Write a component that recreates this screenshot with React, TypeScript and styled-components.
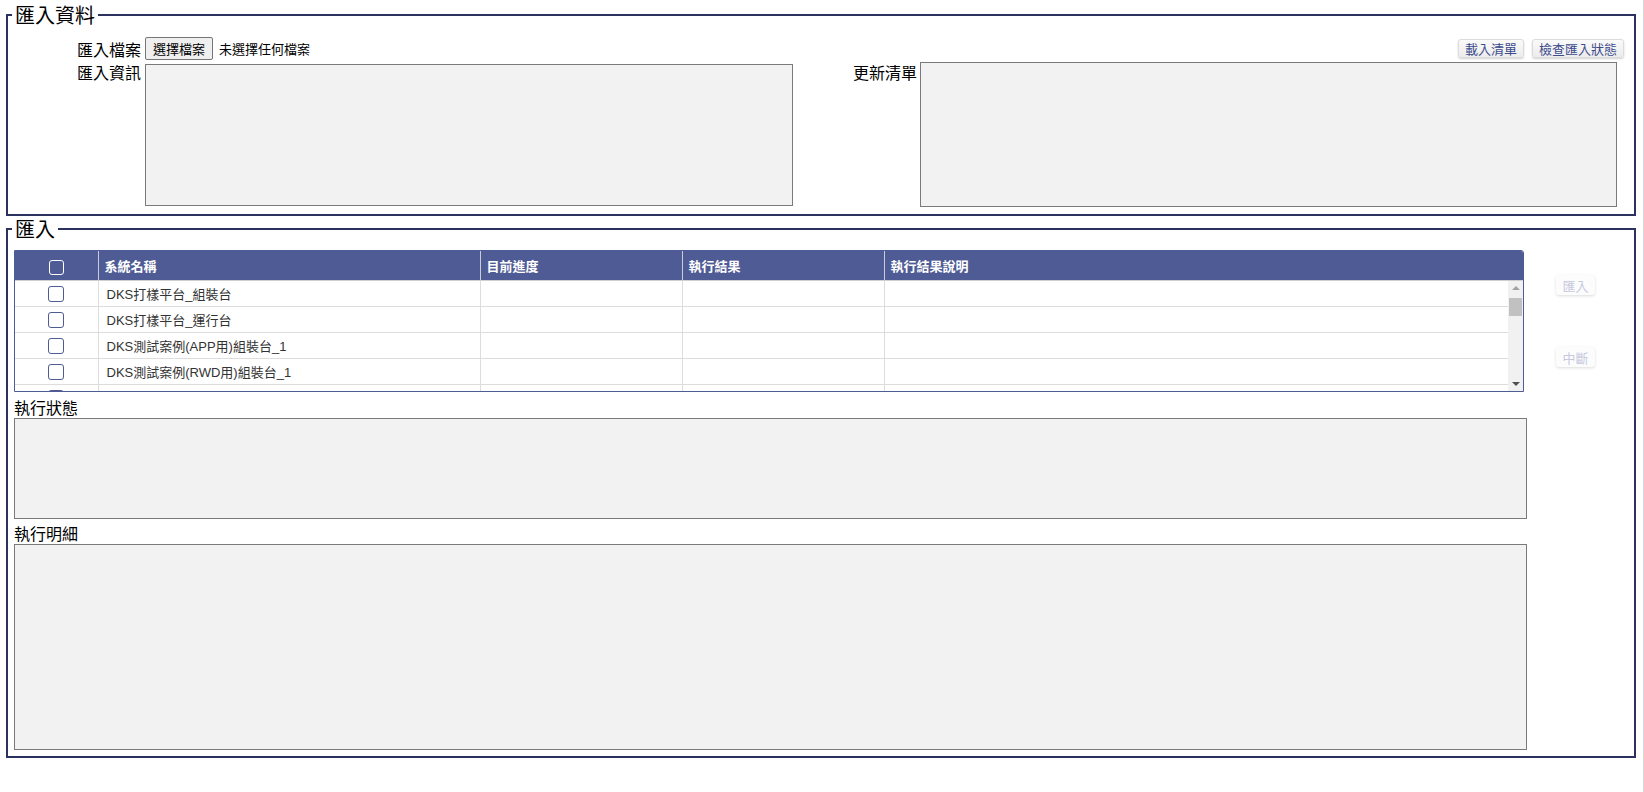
import styled, { createGlobalStyle } from 'styled-components';

const GlobalStyle = createGlobalStyle`
  html, body {
    margin: 0;
    padding: 0;
    background: #fff;
  }
  body {
    font-family: "Liberation Sans", "Noto Sans CJK TC", sans-serif;
    color: #222;
  }
  * {
    box-sizing: border-box;
  }
`;

const Page = styled.div`
  min-height: 100vh;
  padding-top: 4px;
  border-right: 1px solid #d6d6d6;
`;

const Fieldset = styled.fieldset`
  margin: 0 7px 0 6px;
  padding: 0;
  min-width: 0;
  border: 2px solid #2c3260;

  & + & {
    margin-top: 2px;
  }
`;

const Legend = styled.legend`
  margin-left: 4px;
  padding: 0 3px;
  font-family: "Noto Sans CJK TC", sans-serif;
  font-size: 20px;
  line-height: 22px;
  color: #000;
`;

const TopRow = styled.div`
  display: flex;
  align-items: center;
  margin-top: 11px;
  padding-right: 10px;
`;

const FieldLabel = styled.label<{ $width: number; $gap?: number }>`
  flex: none;
  width: ${(p) => p.$width}px;
  margin-right: ${(p) => p.$gap ?? 4}px;
  text-align: right;
  font-family: "Noto Sans CJK TC", sans-serif;
  font-size: 16px;
  line-height: 20px;
  color: #000;
`;

const FileButton = styled.button`
  height: 23px;
  padding: 0 7px;
  border: 1px solid #767676;
  border-radius: 2px;
  background: #efefef;
  font-family: "Noto Sans CJK TC", sans-serif;
  font-size: 13px;
  color: #000;
`;

const FileName = styled.span`
  margin-left: 6px;
  font-family: "Noto Sans CJK TC", sans-serif;
  font-size: 13px;
  color: #000;
`;

const Spacer = styled.div`
  flex: 1;
`;

const ToolButton = styled.button`
  height: 19px;
  padding: 0 6px;
  margin-left: 8px;
  border: 1px solid #dcdcdc;
  border-radius: 3px;
  background: linear-gradient(#fafafa, #ececec);
  box-shadow: 0 1px 2px rgba(0, 0, 0, 0.18);
  font-family: "Noto Sans CJK TC", sans-serif;
  font-size: 13px;
  line-height: 17px;
  color: #3d4b8c;
`;

const InfoRow = styled.div`
  display: flex;
  align-items: flex-start;
  margin-top: 2px;
  padding-bottom: 7px;
`;

const TextBox = styled.textarea<{ $width: number; $height: number; $offset?: number }>`
  display: block;
  flex: none;
  width: ${(p) => p.$width}px;
  height: ${(p) => p.$height}px;
  margin: ${(p) => p.$offset ?? 0}px 0 0;
  border: 1px solid #7a7a7a;
  background: #f2f2f2;
  resize: none;
  font-family: "Liberation Sans", "Noto Sans CJK TC", sans-serif;
  font-size: 13px;
`;

const ImportBody = styled.div`
  display: flex;
  align-items: flex-start;
  padding: 10px 0 6px 6px;
`;

const MainColumn = styled.div`
  width: 1513px;
`;

const SideColumn = styled.div`
  display: flex;
  flex-direction: column;
  gap: 52px;
  margin-left: 29px;
  padding-top: 25px;
`;

const SideButton = styled.button`
  width: 39px;
  height: 20px;
  padding: 0;
  border: none;
  border-radius: 3px;
  background: #fcfcfd;
  box-shadow: 0 1px 3px rgba(0, 0, 0, 0.14);
  font-family: "Noto Sans CJK TC", sans-serif;
  font-size: 13px;
  color: #c6c9dd;
`;

const Grid = styled.div`
  width: 1510px;
  border: 1px solid #4f5b95;
  border-radius: 0 3px 0 0;
  overflow: hidden;
`;

const HeadTable = styled.table`
  width: 100%;
  table-layout: fixed;
  border-collapse: collapse;
  background: #4f5b95;
`;

const HeadCell = styled.th<{ $center?: boolean }>`
  height: 29px;
  padding: 0 6px;
  border-right: 1px solid #c9cbd6;
  border-bottom: 1px solid #cfcfcf;
  text-align: ${(p) => (p.$center ? 'center' : 'left')};
  font-family: "Noto Sans CJK TC", sans-serif;
  font-size: 13px;
  font-weight: 700;
  color: #fff;

  &:last-child {
    border-right: none;
  }
`;

const BodyWrap = styled.div`
  display: flex;
  height: 110px;
`;

const BodyScroll = styled.div`
  flex: 1;
  min-width: 0;
  overflow: hidden;
`;

const Rail = styled.div`
  flex: none;
  display: flex;
  flex-direction: column;
  align-items: center;
  width: 15px;
  background: #f1f1f1;
`;

const RailArrow = styled.div<{ $down?: boolean }>`
  flex: none;
  width: 0;
  height: 0;
  margin: ${(p) => (p.$down ? 'auto 0 5px' : '5px 0 0')};
  border-left: 4px solid transparent;
  border-right: 4px solid transparent;
  ${(p) =>
    p.$down ? 'border-top: 4px solid #505050;' : 'border-bottom: 4px solid #a3a3a3;'}
`;

const RailThumb = styled.div`
  flex: none;
  width: 13px;
  height: 18px;
  margin-top: 8px;
  background: #c1c1c1;
`;

const BodyTable = styled.table`
  width: 100%;
  table-layout: fixed;
  border-collapse: collapse;
`;

const Cell = styled.td<{ $center?: boolean }>`
  height: 26px;
  padding: 0 8px;
  border-right: 1px solid #dddddd;
  border-bottom: 1px solid #dddddd;
  text-align: ${(p) => (p.$center ? 'center' : 'left')};
  font-size: 13px;
  color: #333;
  white-space: nowrap;
  overflow: hidden;

  &:last-child {
    border-right: none;
  }
`;

const Check = styled.input<{ $light?: boolean }>`
  appearance: none;
  display: inline-block;
  width: ${(p) => (p.$light ? 15 : 16)}px;
  height: ${(p) => (p.$light ? 15 : 16)}px;
  margin: 0;
  vertical-align: middle;
  border: 1px solid ${(p) => (p.$light ? '#ffffff' : '#4f5b95')};
  border-radius: 3px;
  background: transparent;
`;

const SectionLabel = styled.div<{ $offset: number }>`
  margin-top: ${(p) => p.$offset}px;
  font-family: "Noto Sans CJK TC", sans-serif;
  font-size: 16px;
  line-height: 20px;
  color: #000;
`;

const systems = [
  'DKS打樣平台_組裝台',
  'DKS打樣平台_運行台',
  'DKS測試案例(APP用)組裝台_1',
  'DKS測試案例(RWD用)組裝台_1',
  'DKS測試案例(APP用)運行台_1',
  'DKS測試案例(RWD用)運行台_1',
  'DKS測試案例(APP用)組裝台_2',
  'DKS測試案例(RWD用)組裝台_2',
  'DKS測試案例(APP用)運行台_2',
  'DKS測試案例(RWD用)運行台_2',
  'DKS範本平台_組裝台',
  'DKS範本平台_運行台',
  'DKS報表平台_組裝台',
  'DKS報表平台_運行台',
  'DKS流程平台_組裝台',
  'DKS流程平台_運行台',
  'DKS行動平台_組裝台',
  'DKS行動平台_運行台',
];

function Cols() {
  return (
    <colgroup>
      <col style={{ width: 83 }} />
      <col style={{ width: 382 }} />
      <col style={{ width: 202 }} />
      <col style={{ width: 202 }} />
      <col />
    </colgroup>
  );
}

function SystemGrid() {
  return (
    <Grid>
      <HeadTable>
        <Cols />
        <thead>
          <tr>
            <HeadCell $center>
              <Check type="checkbox" $light />
            </HeadCell>
            <HeadCell>系統名稱</HeadCell>
            <HeadCell>目前進度</HeadCell>
            <HeadCell>執行結果</HeadCell>
            <HeadCell>執行結果說明</HeadCell>
          </tr>
        </thead>
      </HeadTable>
      <BodyWrap>
        <BodyScroll>
          <BodyTable>
            <Cols />
            <tbody>
              {systems.map((name) => (
                <tr key={name}>
                  <Cell $center>
                    <Check type="checkbox" />
                  </Cell>
                  <Cell>{name}</Cell>
                  <Cell />
                  <Cell />
                  <Cell />
                </tr>
              ))}
            </tbody>
          </BodyTable>
        </BodyScroll>
        <Rail>
          <RailArrow />
          <RailThumb />
          <RailArrow $down />
        </Rail>
      </BodyWrap>
    </Grid>
  );
}

export default function App() {
  return (
    <Page>
      <GlobalStyle />
      <Fieldset>
        <Legend>匯入資料</Legend>
        <TopRow>
          <FieldLabel $width={133}>匯入檔案</FieldLabel>
          <FileButton type="button">選擇檔案</FileButton>
          <FileName>未選擇任何檔案</FileName>
          <Spacer />
          <ToolButton type="button">載入清單</ToolButton>
          <ToolButton type="button">檢查匯入狀態</ToolButton>
        </TopRow>
        <InfoRow>
          <FieldLabel $width={133}>匯入資訊</FieldLabel>
          <TextBox $width={648} $height={142} $offset={2} readOnly />
          <FieldLabel $width={124} $gap={3}>
            更新清單
          </FieldLabel>
          <TextBox $width={697} $height={145} readOnly />
        </InfoRow>
      </Fieldset>
      <Fieldset>
        <Legend>匯入</Legend>
        <ImportBody>
          <MainColumn>
            <SystemGrid />
            <SectionLabel $offset={5}>執行狀態</SectionLabel>
            <TextBox $width={1513} $height={101} $offset={1} readOnly />
            <SectionLabel $offset={4}>執行明細</SectionLabel>
            <TextBox $width={1513} $height={206} $offset={1} readOnly />
          </MainColumn>
          <SideColumn>
            <SideButton type="button" disabled>
              匯入
            </SideButton>
            <SideButton type="button" disabled>
              中斷
            </SideButton>
          </SideColumn>
        </ImportBody>
      </Fieldset>
    </Page>
  );
}
